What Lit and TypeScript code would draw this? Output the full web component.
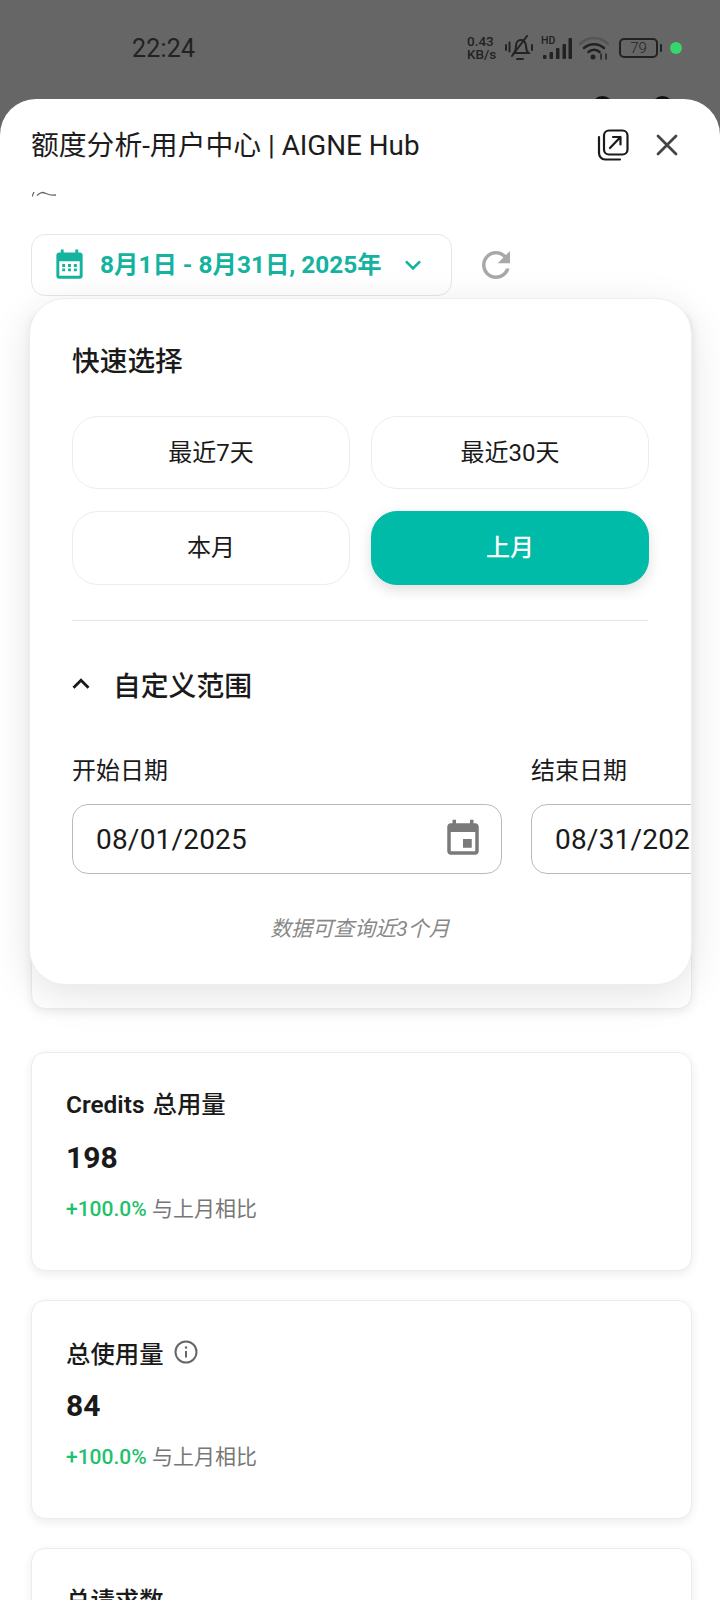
import { LitElement, html, css } from "lit";
import { customElement } from "lit/decorators.js";

const stats = [
  { latin: "Credits", title: "总用量", value: "198", info: false },
  { latin: "", title: "总使用量", value: "84", info: true },
  { latin: "", title: "总请求数", value: "84", info: false },
];

@customElement("app-root")
export class AppRoot extends LitElement {
  static styles = css`
    :host {
      display: block;
      position: relative;
      width: 720px;
      height: 1600px;
      overflow: hidden;
      background: #666;
      font-family: Roboto, "Noto Sans CJK SC", sans-serif;
      color: #1a1a1a;
    }
    svg { display: block; flex: none; }
    .status {
      position: relative;
      height: 99px;
      box-sizing: border-box;
      padding: 0 38px 3px 132px;
      display: flex;
      align-items: center;
      justify-content: space-between;
      color: #222;
    }
    .blob {
      position: absolute;
      top: 96px;
      width: 21px;
      height: 21px;
      border-radius: 50%;
      background: #111;
    }
    .blob.a { left: 592px; }
    .blob.b { left: 652px; }
    .time { font-size: 25px; letter-spacing: 0.2px; }
    .indicators { display: flex; align-items: center; }
    .speed {
      width: 34px;
      margin-right: 4px;
      font-size: 13.5px;
      line-height: 13px;
      font-weight: 500;
      text-align: left;
    }
    .signal { position: relative; margin-left: 7px; }
    .hd {
      position: absolute;
      left: 1px;
      top: -2px;
      font-size: 10.5px;
      line-height: 11px;
      font-weight: 500;
    }
    .wifi { margin-left: 7px; }
    .battery {
      box-sizing: border-box;
      width: 39px;
      height: 20px;
      margin-left: 10px;
      border: 2px solid #222;
      border-radius: 5px;
      font-size: 15px;
      line-height: 16px;
      text-align: center;
      font-weight: 300;
    }
    .nub { width: 2px; height: 8px; margin-left: 2px; background: #222; border-radius: 1px; }
    .dot { width: 12px; height: 12px; margin-left: 8px; border-radius: 50%; background: #35d66b; }

    .sheet {
      position: relative;
      height: 1501px;
      background: #fff;
      border-radius: 36px 36px 0 0;
    }
    .header {
      height: 92px;
      padding: 0 42px 0 31px;
      display: flex;
      align-items: center;
    }
    .page-title { flex: 1; padding-bottom: 4px; font-size: 27.8px; color: #1c1c1c; white-space: nowrap; }
    .actions { display: flex; align-items: center; gap: 27px; }
    .mark { margin-left: 32px; }
    .date-row { display: flex; align-items: center; gap: 23px; margin: 37px 0 0 31px; }
    .date-btn {
      box-sizing: border-box;
      width: 421px;
      height: 62px;
      padding: 0 0 0 20px;
      display: flex;
      align-items: center;
      border: 1px solid #e6e6e6;
      border-radius: 14px;
      color: #14b3a0;
      font-size: 24.4px;
      font-weight: 700;
      background: #fff;
      white-space: nowrap;
    }
    .date-btn .label { margin: 0 0 6px 13px; width: 297px; }
    .card {
      box-sizing: border-box;
      width: 661px;
      margin-left: 31px;
      border: 1px solid #ececec;
      border-radius: 14px;
      background: #fff;
      box-shadow: 0 3px 10px rgba(0, 0, 0, 0.08);
    }
    .card.behind { height: 698px; margin-top: 15px; margin-bottom: 43px; }
    .stats { display: flex; flex-direction: column; gap: 29px; }
    .stat { height: 219px; padding: 34px 34px; }
    .stat-title {
      display: flex;
      align-items: center;
      gap: 10px;
      box-sizing: border-box;
      height: 30px;
      font-size: 24.4px;
      font-weight: 500;
    }
    .stat-title.with-info { padding-top: 4px; }
    .latin { font-weight: 600; margin-right: 2px; }
    .stat-value { margin-top: 21px; font-size: 30px; line-height: 40px; font-weight: 700; }
    .stat-delta { margin-top: 16px; font-size: 21px; line-height: 30px; color: #777; }
    .stat-delta b { font-weight: 500; color: #1fc16b; }

    .popover {
      position: absolute;
      left: 29px;
      top: 199px;
      box-sizing: border-box;
      width: 663px;
      height: 687px;
      padding: 43px 43px 0 42px;
      overflow: hidden;
      background: #fff;
      border: 1px solid #eee;
      border-radius: 36px;
      box-shadow: 0 10px 40px rgba(0, 0, 0, 0.11);
    }
    .pop-title { font-size: 27.7px; line-height: 40px; font-weight: 500; }
    .quick {
      display: grid;
      grid-template-columns: 278px 278px;
      grid-template-rows: 73px 74px;
      gap: 22px 21px;
      margin-top: 34px;
    }
    .quick-btn {
      display: flex;
      align-items: center;
      justify-content: center;
      padding-bottom: 5px;
      border: 1px solid #ececec;
      border-radius: 26px;
      font-size: 24px;
    }
    .quick-btn.active {
      border-color: #00bba7;
      background: #00bba7;
      color: #fff;
      font-weight: 500;
      box-shadow: 0 5px 14px rgba(0, 0, 0, 0.13);
    }
    .divider { height: 1px; margin-top: 35px; background: #e6e6e6; }
    .custom {
      display: flex;
      align-items: center;
      gap: 15px;
      margin: 43px 0 0 -8px;
      height: 40px;
      font-size: 27.8px;
      font-weight: 500;
    }
    .fields { display: flex; gap: 29px; margin: 50px -43px 0 0; }
    .field { flex: none; width: 430px; }
    .field-label { font-size: 24px; line-height: 34px; }
    .input {
      box-sizing: border-box;
      height: 70px;
      margin-top: 16px;
      padding: 0 17px 0 23px;
      display: flex;
      align-items: center;
      justify-content: space-between;
      border: 1.5px solid #bbb;
      border-radius: 16px;
      font-size: 28px;
      letter-spacing: 0.2px;
      white-space: nowrap;
    }
    .note {
      margin-top: 40px;
      text-align: center;
      font-size: 21px;
      line-height: 30px;
      font-style: italic;
      color: #888;
    }
  `;

  private calendarIcon() {
    return html`<svg width="42" height="42" viewBox="0 0 24 24" fill="#7a7a7a"><path d="M17 12h-5v5h5v-5zM16 1v2H8V1H6v2H5c-1.11 0-1.99.9-1.99 2L3 19c0 1.1.89 2 2 2h14c1.1 0 2-.9 2-2V5c0-1.1-.9-2-2-2h-1V1h-2zm3 18H5V8h14v11z"/></svg>`;
  }

  private field(label: string, value: string) {
    return html`<div class="field">
      <div class="field-label">${label}</div>
      <div class="input"><span>${value}</span>${this.calendarIcon()}</div>
    </div>`;
  }

  private statusIcons() {
    return html`
      <div class="speed">0.43<br />KB/s</div>
      <svg width="28" height="26" viewBox="0 0 28 26" fill="none" stroke="#222" stroke-width="2" stroke-linecap="round">
        <path d="M9 18c1.500-2 2-3 2-7 0-3.500 2-6 5-6s5 3 5 6c0 4 .5 5 2.500 7z" />
        <path d="M12 24h6" />
        <path d="M1 10v5M4.500 7.500v9M27 10v5" />
        <path d="M7 21 22 1" />
      </svg>
      <div class="signal">
        <span class="hd">HD</span>
        <svg width="32" height="22" viewBox="0 0 32 22" fill="#222">
          <rect x="3" y="18" width="3.500" height="4" rx="1" />
          <rect x="9.500" y="15" width="3.500" height="7" rx="1" />
          <rect x="16" y="11" width="3.500" height="11" rx="1" />
          <rect x="22.500" y="7" width="3.500" height="15" rx="1" />
          <rect x="28.500" y="1" width="3.500" height="21" rx="1" />
        </svg>
      </div>
      <svg class="wifi" width="30" height="24" viewBox="0 0 30 24" fill="none" stroke-linecap="round">
        <path d="M1 8C9 0 21 0 29 8" stroke="#555" stroke-width="2.500" />
        <path d="M5 12c6-5 14-5 20 0" stroke="#222" stroke-width="2.500" />
        <path d="M9.500 16c3-3 8-3 11 0" stroke="#222" stroke-width="2.500" />
        <circle cx="14" cy="21" r="2.500" fill="#222" />
        <path d="M22 18v5M27 23v-5" stroke="#222" stroke-width="1.500" />
      </svg>
      <div class="battery">79</div>
      <div class="nub"></div>
      <div class="dot"></div>
    `;
  }

  render() {
    return html`
      <div class="status">
        <div class="blob a"></div>
        <div class="blob b"></div>
        <div class="time">22:24</div>
        <div class="indicators">${this.statusIcons()}</div>
      </div>
      <div class="sheet">
        <div class="header">
          <div class="page-title">额度分析-用户中心 | AIGNE Hub</div>
          <div class="actions">
            <svg width="32" height="32" viewBox="0 0 32 32" fill="none" stroke="#1a1a1a" stroke-width="2.200" stroke-linecap="round" stroke-linejoin="round">
              <rect x="7" y="1.500" width="23.500" height="24" rx="5" />
              <path d="M2 8v16c0 3.500 2.500 6.500 6 6.500h15" />
              <path d="M13 19 23.500 8M16 8h7.500v7.500" />
            </svg>
            <svg width="22" height="22" viewBox="0 0 22 22" fill="none" stroke="#444" stroke-width="2.800" stroke-linecap="round">
              <path d="M2 2l18 18M20 2 2 20" />
            </svg>
          </div>
        </div>
        <svg class="mark" width="24" height="6" viewBox="0 0 24 6" fill="none" stroke="#666" stroke-width="1.300">
          <path d="M0 5.500 2 1M5 4.500C9 1 10 0.800 14 2.500C17 4 20 4.500 24 4" />
        </svg>
        <div class="date-row">
          <div class="date-btn">
            <svg width="35" height="35" viewBox="0 0 24 24" fill="#14b3a0"><path d="M3 8V5a2 2 0 0 1 2-2h1V1h2v2h8V1h2v2h1a2 2 0 0 1 2 2v14a2 2 0 0 1-2 2H5a2 2 0 0 1-2-2zm2 1v10h14V9zm2 2h2v2H7zm4 0h2v2h-2zm4 0h2v2h-2zm-8 3h2v2H7zm4 0h2v2h-2zm4 0h2v2h-2z" /></svg>
            <span class="label">8月1日 - 8月31日, 2025年</span>
            <svg width="32" height="32" viewBox="0 0 24 24" fill="#14b3a0"><path d="M16.590 8.590 12 13.170 7.410 8.590 6 10l6 6 6-6z" /></svg>
          </div>
          <svg width="42" height="42" viewBox="0 0 24 24" fill="#a8a8a8"><path d="M17.650 6.350C16.200 4.900 14.210 4 12 4c-4.420 0-7.990 3.580-7.990 8s3.570 8 7.990 8c3.730 0 6.840-2.550 7.730-6h-2.080c-.82 2.330-3.040 4-5.650 4-3.310 0-6-2.690-6-6s2.690-6 6-6c1.660 0 3.140.69 4.220 1.780L13 11h7V4l-2.350 2.350z" /></svg>
        </div>
        <div class="card behind"></div>
        <div class="stats">
          ${stats.map(
            (s) => html`<div class="card stat">
              <div class="stat-title ${s.info ? "with-info" : ""}">
                <span>${s.latin ? html`<span class="latin">${s.latin}</span> ` : ""}${s.title}</span>
                ${s.info
                  ? html`<svg width="24" height="24" viewBox="0 0 24 24" fill="none" stroke="#666" stroke-width="2"><circle cx="12" cy="12" r="10.500" /><path d="M12 11v6.500" /><circle cx="12" cy="7.500" r="1.200" fill="#666" stroke="none" /></svg>`
                  : ""}
              </div>
              <div class="stat-value">${s.value}</div>
              <div class="stat-delta"><b>+100.0%</b> 与上月相比</div>
            </div>`
          )}
        </div>
        <div class="popover">
          <div class="pop-title">快速选择</div>
          <div class="quick">
            <div class="quick-btn">最近7天</div>
            <div class="quick-btn">最近30天</div>
            <div class="quick-btn">本月</div>
            <div class="quick-btn active">上月</div>
          </div>
          <div class="divider"></div>
          <div class="custom">
            <svg width="34" height="34" viewBox="0 0 24 24" fill="#1a1a1a"><path d="M7.410 15.410 12 10.830l4.590 4.580L18 14l-6-6-6 6z" /></svg>
            <span>自定义范围</span>
          </div>
          <div class="fields">
            ${this.field("开始日期", "08/01/2025")}
            ${this.field("结束日期", "08/31/2025")}
          </div>
          <div class="note">数据可查询近3个月</div>
        </div>
      </div>
    `;
  }
}
